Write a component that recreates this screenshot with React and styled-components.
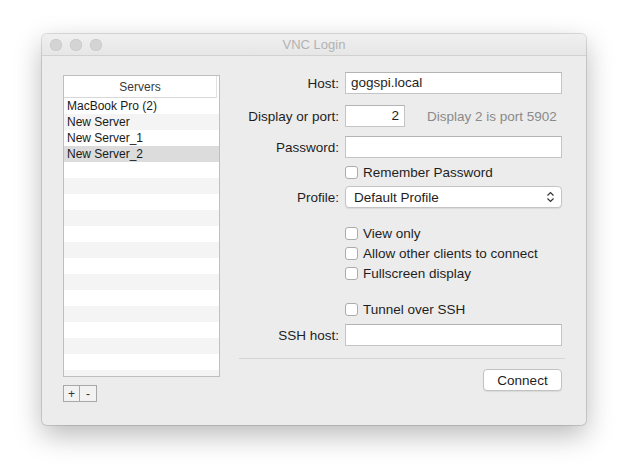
import styled, { createGlobalStyle } from 'styled-components';

const GlobalStyle = createGlobalStyle`
    html, body {
        margin: 0;
        padding: 0;
        background: #ffffff;
        font-family: "Liberation Sans", Arial, sans-serif;
        font-size: 13.5px;
        color: #1e1e1e;
    }
`;

const servers = ["MacBook Pro (2)", "New Server", "New Server_1", "New Server_2"];
const rowCount = 18;

const App = () => {
    const rows = [];
    for (let i = 0; i < rowCount; i++) {
        rows.push(
            <ListRow key={i} $striped={i % 2 === 1} $selected={i === 3}>
                {servers[i] || ""}
            </ListRow>
        );
    }
    return (
        <Page>
            <GlobalStyle />
            <Window>
                <TitleBar>
                    <Lights>
                        <Light />
                        <Light />
                        <Light />
                    </Lights>
                    <Title>VNC Login</Title>
                </TitleBar>
                <Body>
                    <LeftCol>
                        <ListBox>
                            <ListHeader>Servers</ListHeader>
                            <ListRows>{rows}</ListRows>
                        </ListBox>
                        <SmallButtons>
                            <SmallBtn>+</SmallBtn>
                            <SmallBtn>-</SmallBtn>
                        </SmallButtons>
                    </LeftCol>
                    <Form>
                        <Row $gap={0}>
                            <Label>Host:</Label>
                            <Field>gogspi.local</Field>
                        </Row>
                        <Row $gap={11}>
                            <Label>Display or port:</Label>
                            <Field $width={60} $right>2</Field>
                            <Hint>Display 2 is port 5902</Hint>
                        </Row>
                        <Row $gap={9}>
                            <Label>Password:</Label>
                            <Field />
                        </Row>
                        <CheckRow $gap={7}>
                            <Label />
                            <Box />
                            <CheckText>Remember Password</CheckText>
                        </CheckRow>
                        <Row $gap={7}>
                            <Label>Profile:</Label>
                            <Select>
                                <span>Default Profile</span>
                                <svg width="9" height="12" viewBox="0 0 9 12">
                                    <path d="M1.5 4.5 L4.5 1.5 L7.5 4.5 M1.5 7.5 L4.5 10.5 L7.5 7.5" fill="none" stroke="#333" strokeWidth="1.2" />
                                </svg>
                            </Select>
                        </Row>
                        <CheckRow $gap={18}>
                            <Label />
                            <Box />
                            <CheckText>View only</CheckText>
                        </CheckRow>
                        <CheckRow $gap={6}>
                            <Label />
                            <Box />
                            <CheckText>Allow other clients to connect</CheckText>
                        </CheckRow>
                        <CheckRow $gap={6}>
                            <Label />
                            <Box />
                            <CheckText>Fullscreen display</CheckText>
                        </CheckRow>
                        <CheckRow $gap={22}>
                            <Label />
                            <Box />
                            <CheckText>Tunnel over SSH</CheckText>
                        </CheckRow>
                        <Row $gap={8}>
                            <Label>SSH host:</Label>
                            <Field />
                        </Row>
                        <Separator />
                        <Footer>
                            <Button>Connect</Button>
                        </Footer>
                    </Form>
                </Body>
            </Window>
        </Page>
    );
}
export default App;

const Page = styled.div`
    padding: 34px 0 0 42px;
    height: 476px;
    box-sizing: border-box;
`;
const Window = styled.div`
    width: 544px;
    height: 391px;
    background: #ececec;
    border-radius: 5px;
    box-shadow: 0 0 0 1px rgba(0,0,0,0.12), 0 10px 28px rgba(0,0,0,0.28);
    overflow: hidden;
    display: flex;
    flex-direction: column;
`;
const TitleBar = styled.div`
    height: 22px;
    flex: none;
    position: relative;
    display: flex;
    align-items: center;
    justify-content: center;
    background: linear-gradient(#f0f0f0, #e6e6e6);
    border-bottom: 1px solid #d1d1d1;
    box-sizing: border-box;
`;
const Lights = styled.div`
    position: absolute;
    left: 8px;
    top: 5px;
    display: flex;
    gap: 8px;
`;
const Light = styled.div`
    width: 12px;
    height: 12px;
    border-radius: 50%;
    background: #d4d4d4;
    box-shadow: inset 0 0 0 0.5px #c4c4c4;
`;
const Title = styled.div`
    color: #b2b2b2;
    font-size: 13px;
`;
const Body = styled.div`
    flex: 1;
    display: flex;
    padding: 16px 21px 0 21px;
`;
const LeftCol = styled.div`
    display: flex;
    flex-direction: column;
    padding-top: 3px;
`;
const ListBox = styled.div`
    width: 157px;
    height: 302px;
    border: 1px solid #bfbfbf;
    background: #ffffff;
    overflow: hidden;
    box-sizing: border-box;
    font-size: 12px;
`;
const ListHeader = styled.div`
    height: 22px;
    line-height: 22px;
    text-align: center;
    color: #3a3a3a;
    border-bottom: 1px solid #d8d8d8;
    border-right: 1px solid #e2e2e2;
    margin-right: 2px;
    box-sizing: border-box;
`;
const ListRows = styled.div`
    display: flex;
    flex-direction: column;
`;
const ListRow = styled.div`
    height: 16px;
    line-height: 16px;
    padding-left: 3px;
    white-space: nowrap;
    color: #1a1a1a;
    background: ${p => p.$selected ? '#dcdcdc' : p.$striped ? '#f4f4f4' : '#ffffff'};
`;
const SmallButtons = styled.div`
    display: flex;
    margin-top: 8px;
`;
const SmallBtn = styled.div`
    width: 17px;
    height: 17px;
    box-sizing: border-box;
    border: 1px solid #a8a8a8;
    background: #f2f2f2;
    display: flex;
    align-items: center;
    justify-content: center;
    font-size: 12px;
    color: #333;
    & + & {
        border-left: none;
    }
`;
const Form = styled.div`
    margin-left: 19px;
    width: 326px;
    display: flex;
    flex-direction: column;
`;
const Row = styled.div`
    display: flex;
    align-items: center;
    margin-top: ${p => p.$gap}px;
    height: 22px;
`;
const CheckRow = styled.div`
    display: flex;
    align-items: center;
    margin-top: ${p => p.$gap}px;
    height: 14px;
`;
const Label = styled.div`
    width: 100px;
    flex: none;
    text-align: right;
    margin-right: 6px;
    white-space: nowrap;
    display: flex;
    justify-content: flex-end;
`;
const Field = styled.div`
    width: ${p => p.$width || 217}px;
    height: 22px;
    box-sizing: border-box;
    border: 1px solid #c4c4c4;
    border-top-color: #b4b4b4;
    background: #ffffff;
    padding: 0 5px;
    line-height: 20px;
    text-align: ${p => p.$right ? 'right' : 'left'};
    flex: none;
`;
const Hint = styled.div`
    margin-left: 22px;
    color: #8a8a8a;
    white-space: nowrap;
`;
const Box = styled.div`
    width: 13px;
    height: 13px;
    box-sizing: border-box;
    border: 1px solid #acacac;
    border-radius: 3px;
    background: #ffffff;
    flex: none;
`;
const CheckText = styled.div`
    margin-left: 5px;
    white-space: nowrap;
`;
const Select = styled.div`
    width: 217px;
    height: 22px;
    box-sizing: border-box;
    border: 1px solid #c4c4c4;
    border-radius: 4px;
    background: #ffffff;
    box-shadow: 0 1px 1px rgba(0,0,0,0.08);
    padding: 0 6px 0 8px;
    display: flex;
    align-items: center;
    justify-content: space-between;
`;
const Separator = styled.div`
    margin-top: 12px;
    height: 1px;
    background: #d5d5d5;
`;
const Footer = styled.div`
    display: flex;
    justify-content: flex-end;
    padding-right: 3px;
    margin-top: 10px;
`;
const Button = styled.div`
    width: 79px;
    height: 22px;
    box-sizing: border-box;
    border: 1px solid #c2c2c2;
    border-radius: 4px;
    background: #ffffff;
    box-shadow: 0 1px 1px rgba(0,0,0,0.08);
    display: flex;
    align-items: center;
    justify-content: center;
`;
